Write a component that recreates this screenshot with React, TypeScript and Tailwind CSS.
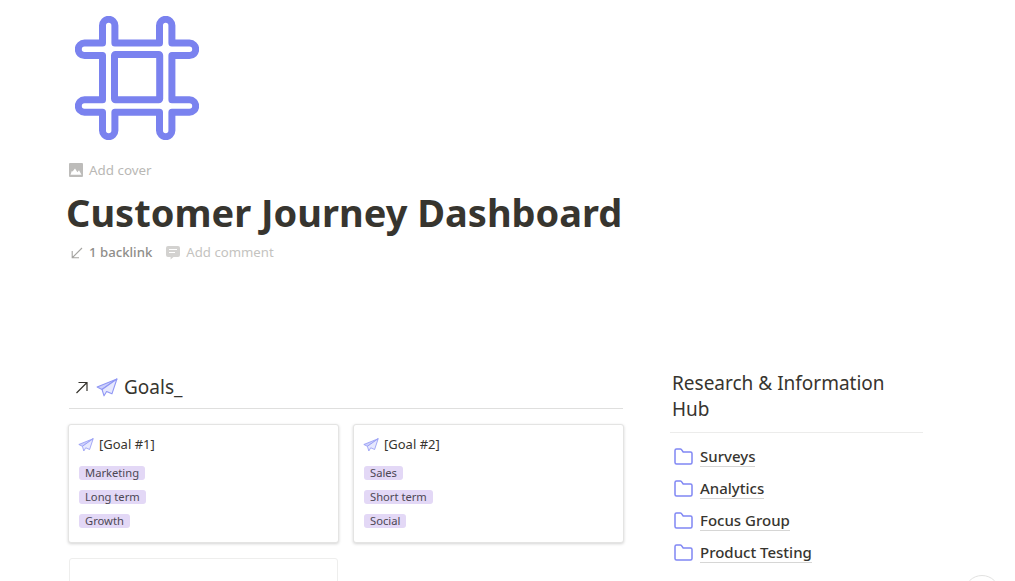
const FONT = "font-['Noto_Sans','Open_Sans',sans-serif]";

function HashIcon() {
  return (
    <svg width="124" height="124" viewBox="0 0 124 124" fill="none" stroke="#7a82ef" strokeWidth="7" strokeLinejoin="round">
      <path d="M27.500 9.500a6.200 6.200 0 0 1 12.400 0V27.100H84.500V9.500a6.200 6.200 0 0 1 12.400 0V27.100H114.500a6.200 6.200 0 0 1 0 12.400H96.900V83.800H114.500a6.200 6.200 0 0 1 0 12.400H96.900V114.500a6.200 6.200 0 0 1-12.400 0V96.200H39.900V114.500a6.200 6.200 0 0 1-12.400 0V96.200H9.500a6.200 6.200 0 0 1 0-12.400H27.500V39.500H9.500a6.200 6.200 0 0 1 0-12.400H27.500Z" />
      <rect x="39.500" y="38.500" width="45.200" height="45.200" rx="1" />
    </svg>
  );
}

function ImageIcon() {
  return (
    <svg width="14" height="14" viewBox="0 0 14 14">
      <path fillRule="evenodd" fill="#bdbcba" d="M1 0h12a1 1 0 0 1 1 1v12a1 1 0 0 1-1 1H1a1 1 0 0 1-1-1V1a1 1 0 0 1 1-1Zm.500 11.800h11L10 7.200 8.400 9.200 6 5.600 3.600 8.600 2.800 8Z" />
    </svg>
  );
}

function BacklinkIcon() {
  return (
    <svg width="12" height="12" viewBox="0 0 12 12" fill="none" stroke="#a5a4a1" strokeWidth="1.100">
      <path d="M11 1 1.500 10.500M1.200 4v6.800H8" />
    </svg>
  );
}

function CommentIcon() {
  return (
    <svg width="14" height="14" viewBox="0 0 14 14">
      <path fillRule="evenodd" fill="#d3d2d0" d="M2 0h10a2 2 0 0 1 2 2v7a2 2 0 0 1-2 2H7.500L4.600 13.600V11H2a2 2 0 0 1-2-2V2a2 2 0 0 1 2-2Zm1 3v1h8V3Zm0 3v1h6V6Z" />
    </svg>
  );
}

function PlaneIcon({ size }: { size: number }) {
  return (
    <svg width={size} height={size * 0.9} viewBox="0 0 22 20" fill="none" strokeLinejoin="round">
      <path d="M21 1 1 9l5 2.600L21 1Z" fill="#ccd0fb" stroke="#8f96f4" strokeWidth="1.100" />
      <path d="M21 1 6 11.600 8 18l2.600-4.400L16 16 21 1Z" fill="#e6e8fe" stroke="#8f96f4" strokeWidth="1.100" />
    </svg>
  );
}

function FolderIcon() {
  return (
    <svg width="19" height="17" viewBox="0 0 19 17" fill="none" stroke="#8087f4" strokeWidth="1.500" strokeLinejoin="round">
      <path d="M1 2.500A1.500 1.500 0 0 1 2.500 1h3.800c.5 0 .9.200 1.200.600L9.200 4h7.300A1.500 1.500 0 0 1 18 5.500v9a1.500 1.500 0 0 1-1.500 1.500h-14A1.500 1.500 0 0 1 1 14.500Z" />
    </svg>
  );
}

function Tag({ children }: { children: string }) {
  return (
    <div className="flex h-[24px] items-center">
      <span className="inline-block h-[14px] rounded-[3px] bg-[#e3d8f6] px-[6px] text-[11.200px] leading-[14px] text-[#4c4753]">
        {children}
      </span>
    </div>
  );
}

function GoalCard({ title, tags }: { title: string; tags: string[] }) {
  return (
    <div className="h-[119px] w-[271px] rounded-[3px] border border-[#e4e4e3] bg-white pl-[9px] pt-[10px] shadow-[0_1px_3px_rgba(15,15,15,0.18)]">
      <div className="flex h-[20px] items-center gap-[5px]">
        <PlaneIcon size={16} />
        <span className="text-[13px] text-[#37352f]">{title}</span>
      </div>
      <div className="mt-[6px] flex flex-col pl-[1px]">
        {tags.map((t) => (
          <Tag key={t}>{t}</Tag>
        ))}
      </div>
    </div>
  );
}

function HubRow({ label }: { label: string }) {
  return (
    <div className="flex h-[32px] items-center gap-[7px] pl-[4px]">
      <FolderIcon />
      <span className="border-b border-[#d6d6d5] text-[15px] font-medium leading-[20px] text-[#37352f]">{label}</span>
    </div>
  );
}

export default function App() {
  return (
    <div className={`${FONT} relative h-[581px] w-[1015px] overflow-hidden bg-white pl-[68px]`}>
      <div className="pl-[7px] pt-[16px]">
        <HashIcon />
      </div>
      <div className="mt-[20px] flex h-[20px] items-center gap-[6px] pl-[1px] text-[13.400px] text-[#b9b8b5]">
        <ImageIcon />
        <span>Add cover</span>
      </div>
      <h1 className="mt-[7px] -ml-[2px] text-[38px] font-bold leading-[50px] text-[#37352f]">Customer Journey Dashboard</h1>
      <div className="mt-[6px] flex h-[20px] items-center pl-[3px] text-[13.200px]">
        <BacklinkIcon />
        <span className="ml-[6px] font-medium text-[#8f8e8a]">1 backlink</span>
        <span className="ml-[14px]"><CommentIcon /></span>
        <span className="ml-[6px] text-[#c4c3c0]">Add comment</span>
      </div>
      <div className="mt-[109px] flex">
        <div className="w-[555px]">
          <div className="ml-[1px] flex h-[37px] items-center border-b border-[#dfdfde] pb-[5px] pl-[6px]">
            <svg width="13" height="13" viewBox="0 0 13 13" fill="none" stroke="#37352f" strokeWidth="1.200">
              <path d="M1.500 12 12 1.500M3.500 1.500H12V10" />
            </svg>
            <span className="ml-[8px]"><PlaneIcon size={22} /></span>
            <span className="ml-[6px] text-[19px] text-[#37352f]">Goals_</span>
          </div>
          <div className="mt-[15px] grid grid-cols-[271px_271px] gap-x-[14px] gap-y-[15px]">
            <GoalCard title="[Goal #1]" tags={["Marketing", "Long term", "Growth"]} />
            <GoalCard title="[Goal #2]" tags={["Sales", "Short term", "Social"]} />
            <div className="ml-[1px] h-[40px] w-[269px] rounded-[3px] border border-[#eeeeed] bg-white" />
          </div>
        </div>
        <div className="-mt-[2px] ml-[47px] w-[253px]">
          <div className="border-b border-[#ececeb] pb-[10px] pl-[2px] text-[19px] leading-[26px] text-[#37352f]">
            Research &amp; Information
            <br />
            Hub
          </div>
          <div className="mt-[7px]">
            <HubRow label="Surveys" />
            <HubRow label="Analytics" />
            <HubRow label="Focus Group" />
            <HubRow label="Product Testing" />
          </div>
        </div>
      </div>
      <div className="absolute left-[964px] top-[575px] h-[36px] w-[36px] rounded-full border border-[#e2e2e1] bg-white" />
    </div>
  );
}
